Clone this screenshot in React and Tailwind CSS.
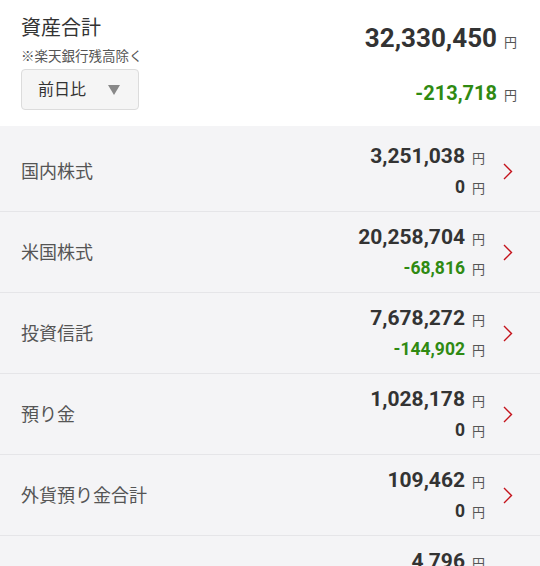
const rows = [
  { label: "国内株式", value: "3,251,038", diff: "0" },
  { label: "米国株式", value: "20,258,704", diff: "-68,816" },
  { label: "投資信託", value: "7,678,272", diff: "-144,902" },
  { label: "預り金", value: "1,028,178", diff: "0" },
  { label: "外貨預り金合計", value: "109,462", diff: "0" },
  { label: "", value: "4,796", diff: "0" },
];

function Chevron() {
  return (
    <svg width="10" height="17" viewBox="0 0 10 17" fill="none" className="shrink-0">
      <path d="M1 1 L8.5 8.5 L1 16" stroke="#c4121b" strokeWidth="1.4" />
    </svg>
  );
}

function Yen() {
  return <span className="text-[13px] font-normal text-[#555] ml-[7px]">円</span>;
}

export default function App() {
  return (
    <div className="w-[540px] h-[566px] overflow-hidden bg-[#f4f4f6] text-[#333] font-['Roboto','Noto_Sans_CJK_JP',sans-serif]">
      <div className="h-[126px] bg-white flex justify-between pl-[21px] pr-[23px]">
        <div className="flex flex-col pt-[14px]">
          <div className="text-[20px] leading-[28px] text-[#333]">資産合計</div>
          <div className="text-[13.5px] leading-[20px] text-[#555] mt-[4px]">※楽天銀行残高除く</div>
          <button className="mt-[3px] w-[118px] h-[41px] flex items-center justify-between pl-[16px] pr-[18px] bg-[#f5f5f5] border border-[#dcdcdc] rounded-[4px]">
            <span className="text-[16px] text-[#333]">前日比</span>
            <span className="w-0 h-0 border-l-[6px] border-r-[6px] border-t-[10px] border-l-transparent border-r-transparent border-t-[#888]"></span>
          </button>
        </div>
        <div className="flex flex-col items-end pt-[23px]">
          <div className="flex items-baseline leading-[30px]">
            <span className="text-[26px] font-bold">32,330,450</span>
            <Yen />
          </div>
          <div className="flex items-baseline leading-[24px] mt-[23px]">
            <span className="text-[20px] font-bold text-[#2f8a12]">-213,718</span>
            <Yen />
          </div>
        </div>
      </div>
      <div className="pt-[5px]">
        {rows.map((r, i) => (
          <div key={i} className="h-[81px] flex items-center justify-between border-b border-[#e5e5e8] pl-[21px] pr-[27px]">
            <span className="text-[18px] text-[#555]">{r.label}</span>
            <div className="flex items-center">
              <div className="flex flex-col items-end">
                <div className="flex items-baseline leading-[26px]">
                  <span className="text-[21px] font-bold">{r.value}</span>
                  <Yen />
                </div>
                <div className="flex items-baseline leading-[22px] mt-[4px]">
                  <span className={`text-[17.5px] font-bold ${r.diff.startsWith("-") ? "text-[#2f8a12]" : "text-[#333]"}`}>{r.diff}</span>
                  <Yen />
                </div>
              </div>
              <div className="ml-[18px]">
                <Chevron />
              </div>
            </div>
          </div>
        ))}
      </div>
    </div>
  );
}
